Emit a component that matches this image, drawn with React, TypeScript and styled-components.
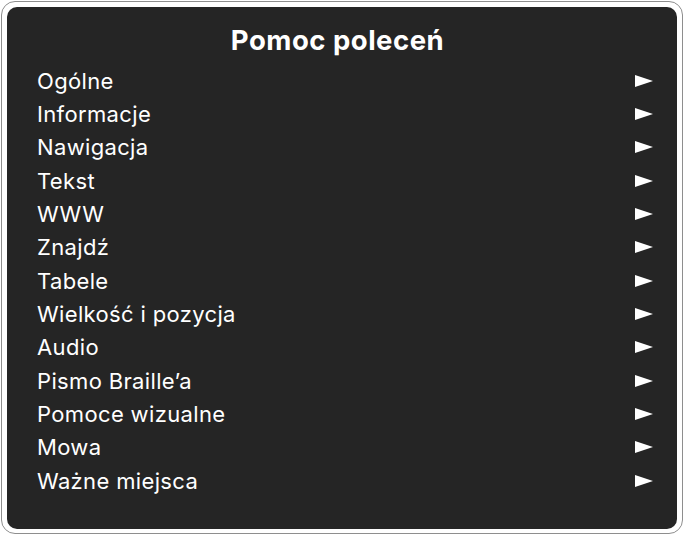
import React from "react";
import styled, { createGlobalStyle } from "styled-components";

const GlobalStyle = createGlobalStyle`
    html, body {
        margin: 0;
        padding: 0;
        background: #ffffff;
    }
    body {
        font-family: Inter, "Noto Sans", "Liberation Sans", sans-serif;
        -webkit-font-smoothing: antialiased;
    }
`;

const Frame = styled.div`
    box-sizing: border-box;
    width: 682px;
    height: 533px;
    margin: 1px 0 0 1px;
    padding: 5px 5px 4px 5px;
    border: 1px solid #8e8e8e;
    border-radius: 14px;
    background: #ffffff;
`;

const Panel = styled.div`
    box-sizing: border-box;
    height: 100%;
    border-radius: 10px;
    background: #252525;
    padding: 18px 24px 0 30px;
    display: flex;
    flex-direction: column;
`;

const Title = styled.h1`
    margin: 0;
    padding-right: 15px;
    text-align: center;
    font-size: 27.5px;
    line-height: 30px;
    font-weight: 700;
    color: #ffffff;
    letter-spacing: 0.5px;
`;

const List = styled.ul`
    list-style: none;
    margin: 9px 0 0;
    padding: 0;
`;

const Row = styled.li`
    display: flex;
    align-items: center;
    justify-content: space-between;
    height: 33.35px;
`;

const Label = styled.span`
    font-size: 22px;
    font-weight: 400;
    color: #ffffff;
    letter-spacing: 0.35px;
`;

const Arrow = styled.span`
    width: 0;
    height: 0;
    border-top: 6.5px solid transparent;
    border-bottom: 6.5px solid transparent;
    border-left: 18px solid #ffffff;
`;

const items = [
    "Ogólne",
    "Informacje",
    "Nawigacja",
    "Tekst",
    "WWW",
    "Znajdź",
    "Tabele",
    "Wielkość i pozycja",
    "Audio",
    "Pismo Braille’a",
    "Pomoce wizualne",
    "Mowa",
    "Ważne miejsca",
];

const App = () => {
    return (
        <>
            <GlobalStyle />
            <Frame>
                <Panel>
                    <Title>Pomoc poleceń</Title>
                    <List>
                        {items.map((item) => (
                            <Row key={item}>
                                <Label>{item}</Label>
                                <Arrow />
                            </Row>
                        ))}
                    </List>
                </Panel>
            </Frame>
        </>
    );
};

export default App;
